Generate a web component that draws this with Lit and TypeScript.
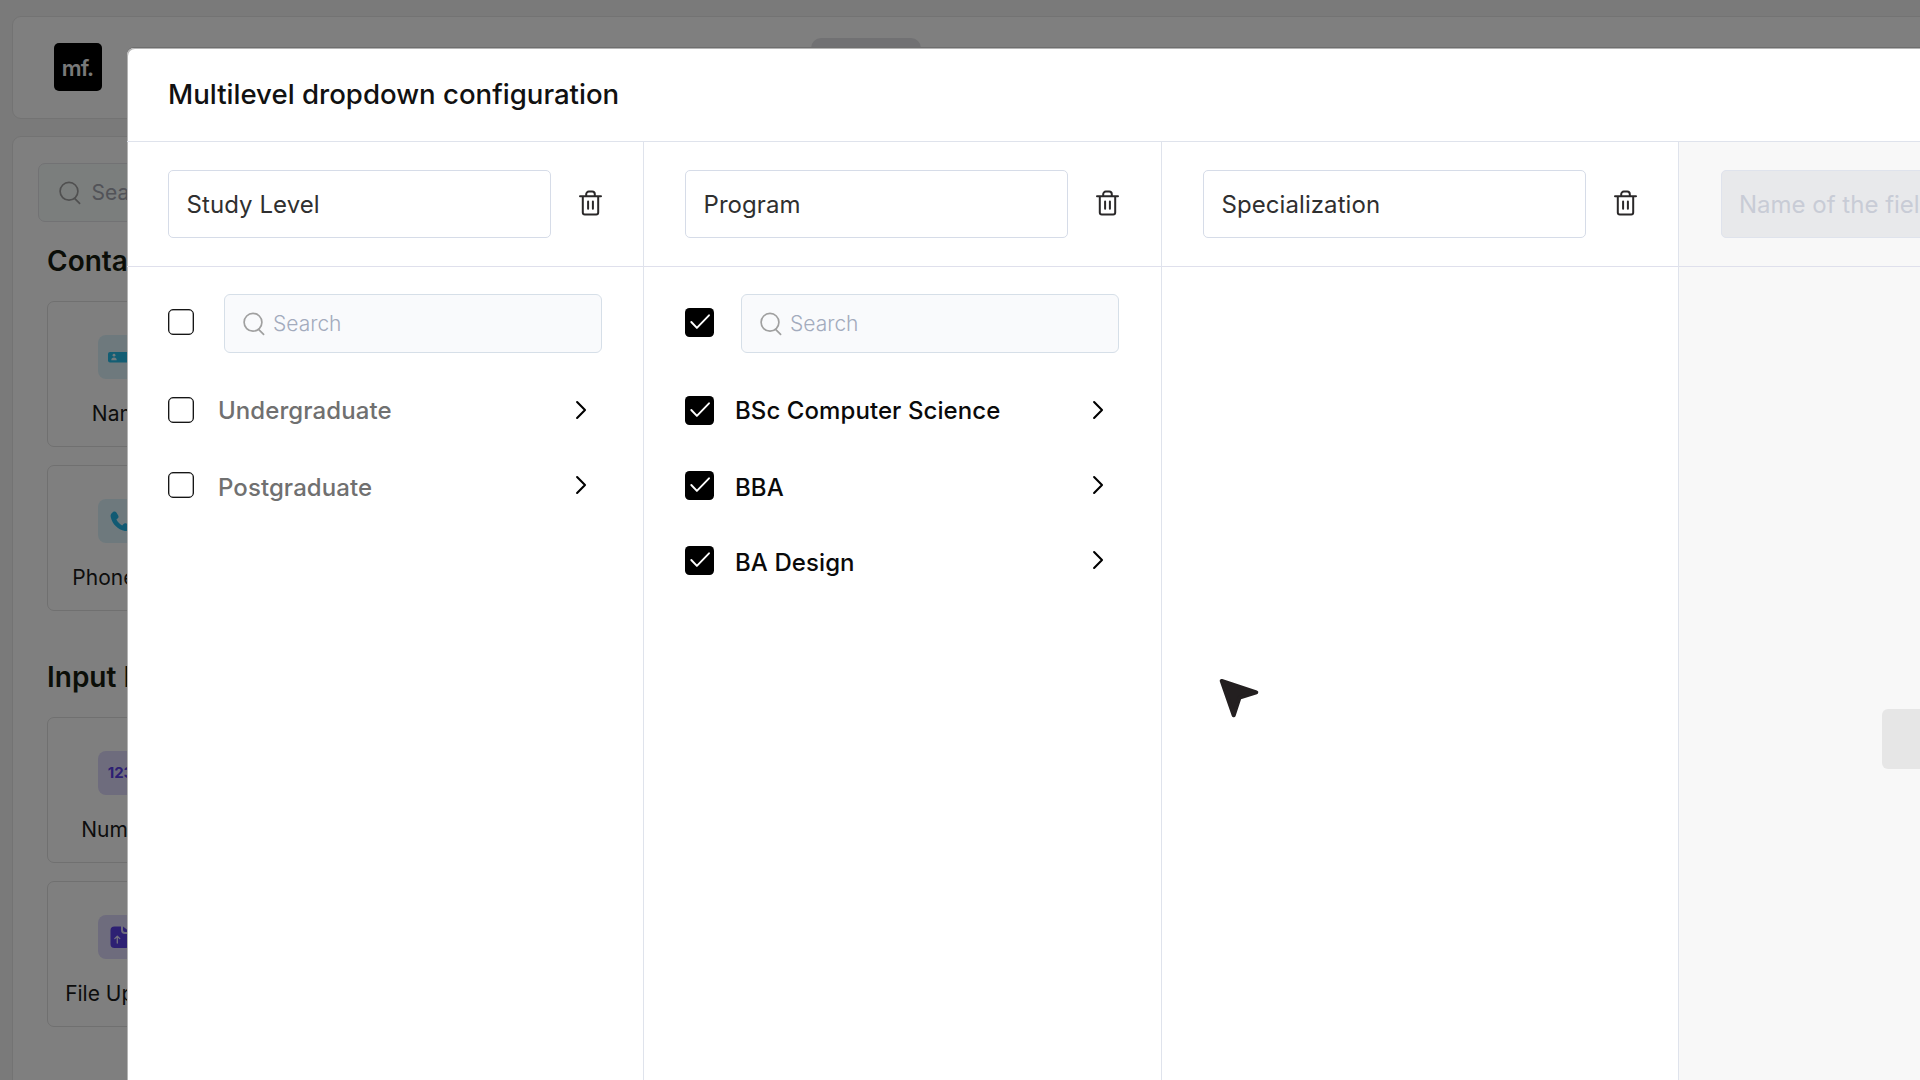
import { LitElement, html, css, nothing } from "lit";
import { customElement, property } from "lit/decorators.js";

const trashIcon = html`<svg class="trash" width="25" height="28" viewBox="0 0 25 28" fill="none" stroke="#2a2829" stroke-width="2" stroke-linecap="round" stroke-linejoin="round">
  <path d="M2 7.300H23M4.800 7.300V23.600a2 2 0 0 0 2 2H18.200a2 2 0 0 0 2-2V7.300M8.200 7V5.200a2.600 2.600 0 0 1 2.600-2.600h3.400A2.600 2.600 0 0 1 16.800 5.200V7M10.100 12.500v7.300M14.900 12.500v7.300"/>
</svg>`;

const searchIcon = html`<svg class="glass" width="22" height="24" viewBox="0 0 22 24" fill="none" stroke="#a0a0a0" stroke-width="1.700" stroke-linecap="round">
  <circle cx="10" cy="10.300" r="8.900"/><path d="M15.600 17.300 20.600 22.300"/>
</svg>`;

const chevron = html`<svg class="chevron" width="14" height="20" viewBox="0 0 14 20" fill="none" stroke="#000" stroke-width="2.100" stroke-linecap="round" stroke-linejoin="round">
  <path d="M3.100 2.100 11 10 3.100 17.900"/>
</svg>`;

const tick = html`<svg class="tick" width="29" height="29" viewBox="0 0 29 29" fill="none" stroke="#fff" stroke-width="1.900" stroke-linecap="round" stroke-linejoin="round">
  <path d="M6.300 14 11.900 19.900 24 7.300"/>
</svg>`;

const tileIcons: Record<string, unknown> = {
  name: html`<svg width="44" height="44" viewBox="0 0 44 44"><rect x="10" y="17" width="25" height="10.500" rx="2" fill="#27bde8"/><circle cx="16" cy="20.200" r="1.400" fill="#e4f8fe"/><path d="M13.300 25.200q0-2.800 2.700-2.800t2.700 2.800z" fill="#e4f8fe"/></svg>`,
  phone: html`<svg width="44" height="44" viewBox="0 0 44 44"><path d="M15.100 12.900c1.200-.9 2.500-.5 3.300.7l1.800 2.800c.7 1.200.3 2.300-.7 3.200l-1.100 1c1.200 2.400 3.200 4.500 5.800 5.800l1.100-1.200c.9-1 2.100-1.300 3.200-.6l2.800 1.900c1.200.8 1.500 2.100.7 3.300-1.200 1.800-2.900 2.600-5.100 2.100-7.300-1.600-12.600-6.900-14.200-14-.5-2.200.5-3.800 2.400-5z" fill="#22b5e6"/></svg>`,
  number: html`<span class="digits">123</span>`,
  file: html`<svg width="44" height="44" viewBox="0 0 44 44"><path d="M16.500 11.500H23V15a4 4 0 0 0 4 4h5v10a4 4 0 0 1-4 4H16.500a4 4 0 0 1-4-4V15.500a4 4 0 0 1 4-4z" fill="#5a40e6"/><path d="M25 11.500 32 17h-5a2 2 0 0 1-2-2z" fill="#5a40e6"/><path d="M19.300 28v-6.800m-2.500 2.400 2.500-2.500 2.500 2.500" fill="none" stroke="#e8e3ff" stroke-width="1.300" stroke-linecap="round" stroke-linejoin="round"/></svg>`,
};

@customElement("field-tile")
class FieldTile extends LitElement {
  @property() icon = "";
  @property() label = "";
  @property() tone = "";
  static styles = css`
    :host { display: flex; flex-direction: column; align-items: center; box-sizing: border-box; width: 146px; height: 146px; border: 1px solid #e0e0e0; border-radius: 7px; padding-top: 33px; }
    svg { display: block; }
    .badge { width: 44px; height: 44px; border-radius: 8px; display: flex; align-items: center; justify-content: center; overflow: hidden; background: #dcf3fb; }
    .badge.violet { background: #ddd8fb; }
    .digits { font-size: 15px; font-weight: 700; color: #5a40e6; margin: -2px 0 0 1px; }
    .label { margin-top: 22px; padding-left: 2px; font-size: 21px; line-height: 26px; color: #1a1a1a; white-space: nowrap; }
  `;
  render() {
    return html`<div class="badge ${this.tone}">${tileIcons[this.icon]}</div><div class="label">${this.label}</div>`;
  }
}

@customElement("check-box")
class CheckBox extends LitElement {
  @property({ type: Boolean }) checked = false;
  static styles = css`
    :host { display: flex; align-items: flex-start; width: 29px; height: 29px; flex: none; }
    svg { display: block; }
    .off { box-sizing: border-box; width: 26px; height: 26px; margin-top: 1px; border: 1px solid #161616; border-radius: 5px; background: #fff; box-shadow: inset 0 0 0 0.500px #555; }
    .on { width: 29px; height: 29px; border-radius: 4.500px; background: #000; }
  `;
  render() {
    return this.checked ? html`<div class="on">${tick}</div>` : html`<div class="off"></div>`;
  }
}

interface Level { name: string; checked?: boolean; options: string[]; }

@customElement("level-column")
class LevelColumn extends LitElement {
  @property({ attribute: false }) level!: Level;
  static styles = css`
    :host { display: flex; flex-direction: column; box-sizing: border-box; border-right: 1px solid #dfe3ec; }
    svg { display: block; flex: none; }
    .head { display: flex; align-items: center; box-sizing: border-box; height: 125px; padding: 0 0 0 41px; border-bottom: 1px solid #dfe0ec; }
    .name { box-sizing: border-box; width: 383px; height: 68px; border: 1px solid #d6dce8; border-radius: 5px; padding-left: 17.500px; font-size: 24px; line-height: 67px; letter-spacing: 0.070px; color: #2f2f2f; margin-right: 27px; }
    .trash { margin-top: -2px; }
    .filter { display: flex; align-items: center; margin-top: 27px; padding-left: 41px; height: 59px; }
    .filter check-box { margin-bottom: 2px; }
    .search { display: flex; align-items: center; box-sizing: border-box; width: 378px; height: 59px; border: 1px solid #d6dfe8; border-radius: 6px; background: #f9fafc; margin-left: 26.500px; padding-left: 18.500px; gap: 8px; font-size: 21px; font-weight: 300; color: #a3abbd; }
    .rows { display: flex; flex-direction: column; margin-top: 20px; }
    .row { display: flex; align-items: center; height: 75px; padding-left: 41px; font-size: 24px; font-weight: 500; color: #707070; }
    .row.checked { color: #0a0a0a; }
    .row span { margin-left: 21px; width: 356px; white-space: nowrap; letter-spacing: 0.080px; }
    .row + .row span { padding-top: 3px; }
    .chevron { margin-bottom: 1px; }
  `;
  render() {
    const { name, checked = false, options } = this.level;
    return html`
      <div class="head"><div class="name">${name}</div>${trashIcon}</div>
      ${options.length
        ? html`<div class="filter"><check-box ?checked=${checked}></check-box><div class="search">${searchIcon}<span>Search</span></div></div>
            <div class="rows">${options.map((o) => html`<div class="row ${checked ? "checked" : ""}"><check-box ?checked=${checked}></check-box><span>${o}</span>${chevron}</div>`)}</div>`
        : nothing}`;
  }
}

@customElement("app-root")
class AppRoot extends LitElement {
  static styles = css`
    :host { display: block; position: relative; width: 1920px; height: 1080px; overflow: hidden; font-family: Inter, "Liberation Sans", sans-serif; background: #f4f4f4; }
    svg { display: block; flex: none; }
    .page { display: flex; flex-direction: column; gap: 17px; padding: 16px 0 0 12px; height: 1064px; }
    .bar { box-sizing: border-box; flex: none; width: 1930px; height: 103px; border: 1px solid #e6e6e6; border-radius: 9px; background: #fff; display: flex; align-items: flex-start; padding-left: 40.500px; }
    .logo { box-sizing: border-box; margin-top: 26px; padding-top: 1px; width: 48px; height: 48px; border-radius: 5px; background: #000; color: #f2f2f2; display: flex; align-items: center; justify-content: center; font-size: 22px; font-weight: 600; letter-spacing: -0.900px; }
    .tab { margin: 21px 0 0 709px; width: 110px; height: 60px; border-radius: 10px; background: #e2e3e6; }
    .side { box-sizing: border-box; flex: none; width: 400px; height: 1000px; border: 1px solid #e6e6e6; border-radius: 9px; background: #fff; padding: 26px 0 0 25px; }
    .find { display: flex; align-items: center; gap: 11px; box-sizing: border-box; width: 340px; height: 59px; border: 1px solid #e4e4e8; border-radius: 7px; background: #f7fcfb; padding-left: 19.500px; font-size: 21px; color: #a4a6b0; }
    .group { padding: 22px 0 0 9px; }
    .group + .group { padding-top: 49px; }
    .group h2 { margin: 0; font-size: 28px; line-height: 34px; font-weight: 600; color: #171d10; }
    .tiles { display: flex; flex-direction: column; gap: 18px; margin-top: 23px; }
    .shade { position: absolute; inset: 0; background: rgba(0, 0, 0, 0.5); }
    .modal { position: absolute; left: 127px; top: 48px; width: 2100px; height: 1060px; background: #fff; border-radius: 7px 0 0 0; box-shadow: inset 1px 1px 0 #b4b4b4, 0 -1px 0 #6e6e6e; display: flex; flex-direction: column; }
    .title { box-sizing: border-box; flex: none; height: 94px; padding: 0 41px 2px; border-bottom: 1px solid #dfe3ec; display: flex; align-items: center; font-size: 27.600px; font-weight: 500; color: #111; }
    .columns { flex: 1; display: grid; grid-template-columns: 517px 518px 517px 1fr; }
    .next { background: #f8f8f8; }
    .nexthead { box-sizing: border-box; height: 125px; padding: 28px 0 0 42px; border-bottom: 1px solid #dfe0ec; }
    .placeholder { box-sizing: border-box; width: 383px; height: 68px; border: 1px solid #dfe3ec; border-radius: 5px; background: #e8e9eb; padding-left: 17px; font-size: 24px; line-height: 67px; color: #c8ccd6; white-space: nowrap; }
    .action { margin: 442px 0 0 203px; width: 220px; height: 60px; border-radius: 6px; background: #e6e6e6; }
    .cursor { position: absolute; left: 1218px; top: 676px; }
  `;

  private levels: Level[] = [
    { name: "Study Level", options: ["Undergraduate", "Postgraduate"] },
    { name: "Program", checked: true, options: ["BSc Computer Science", "BBA", "BA Design"] },
    { name: "Specialization", options: [] },
  ];

  render() {
    return html`
      <div class="page">
        <div class="bar"><div class="logo">mf.</div><div class="tab"></div></div>
        <div class="side">
          <div class="find">${searchIcon}<span>Search</span></div>
          <div class="group">
            <h2>Contact</h2>
            <div class="tiles">
              <field-tile icon="name" label="Name"></field-tile>
              <field-tile icon="phone" label="Phone No"></field-tile>
            </div>
          </div>
          <div class="group">
            <h2>Input Fields</h2>
            <div class="tiles">
              <field-tile icon="number" tone="violet" label="Number"></field-tile>
              <field-tile icon="file" tone="violet" label="File Upload"></field-tile>
            </div>
          </div>
        </div>
      </div>
      <div class="shade"></div>
      <div class="modal">
        <div class="title">Multilevel dropdown configuration</div>
        <div class="columns">
          ${this.levels.map((l) => html`<level-column .level=${l}></level-column>`)}
          <div class="next">
            <div class="nexthead"><div class="placeholder">Name of the field</div></div>
            <div class="action"></div>
          </div>
        </div>
      </div>
      <svg class="cursor" width="42" height="42" viewBox="0 0 42 42"><path d="M3.700 4.900 38.300 16.300 21.500 21.600 15.700 39.300Z" fill="#231f20" stroke="#231f20" stroke-width="4" stroke-linejoin="round"/></svg>
    `;
  }
}
